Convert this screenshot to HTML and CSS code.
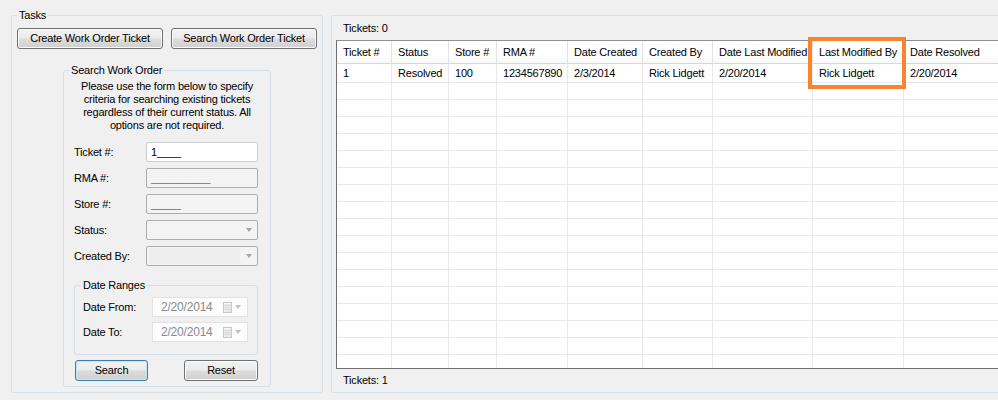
FILE: index.html
```html
<!DOCTYPE html>
<html lang="en">
<head>
    <meta charset="UTF-8">
    <meta name="viewport" content="width=device-width, initial-scale=1.0">
    <title>Work Order Tickets</title>
    <link rel="stylesheet" href="styles.css">
</head>
<body>
    <div class="window">
        <fieldset class="group tasks">
            <legend>Tasks</legend>
            <div class="task-buttons">
                <button class="btn">Create Work Order Ticket</button>
                <button class="btn">Search Work Order Ticket</button>
            </div>

            <fieldset class="group search">
                <legend>Search Work Order</legend>
                <p class="hint">Please use the form below to specify<br>criteria for searching existing tickets<br>regardless of their current status. All<br>options are not required.</p>

                <div class="form">
                    <label>Ticket #:</label>
                    <div class="field">1____</div>
                    <label>RMA #:</label>
                    <div class="field disabled">__________</div>
                    <label>Store #:</label>
                    <div class="field disabled">_____</div>
                    <label>Status:</label>
                    <div class="field combo disabled"><span class="arrow"></span></div>
                    <label>Created By:</label>
                    <div class="field combo disabled"><span class="combo-edit"></span><span class="arrow"></span></div>
                </div>

                <fieldset class="group dates">
                    <legend>Date Ranges</legend>
                    <div class="date-form">
                        <label>Date From:</label>
                        <div class="picker">
                            <span>2/20/2014</span>
                            <svg class="cal" width="9" height="11" viewBox="0 0 9 11"><rect x="0.5" y="0.5" width="8" height="10" fill="#f6f6f6" stroke="#c8c8c8"/><path d="M1 3.5h7M1 5.5h7M1 7.5h7M3 2v8M5 2v8M7 2v8" stroke="#dcdcdc"/></svg>
                            <span class="arrow"></span>
                        </div>
                        <label>Date To:</label>
                        <div class="picker">
                            <span>2/20/2014</span>
                            <svg class="cal" width="9" height="11" viewBox="0 0 9 11"><rect x="0.5" y="0.5" width="8" height="10" fill="#f6f6f6" stroke="#c8c8c8"/><path d="M1 3.5h7M1 5.5h7M1 7.5h7M3 2v8M5 2v8M7 2v8" stroke="#dcdcdc"/></svg>
                            <span class="arrow"></span>
                        </div>
                    </div>
                </fieldset>

                <div class="actions">
                    <button class="btn small default">Search</button>
                    <button class="btn small">Reset</button>
                </div>
            </fieldset>
        </fieldset>

        <div class="group results">
            <div class="count">Tickets: 0</div>
            <div class="grid">
                <table>
                    <colgroup>
                        <col style="width:55px">
                        <col style="width:57px">
                        <col style="width:48px">
                        <col style="width:71px">
                        <col style="width:75px">
                        <col style="width:70px">
                        <col style="width:100px">
                        <col style="width:91px">
                        <col style="width:100px">
                    </colgroup>
                    <thead>
                        <tr>
                            <th>Ticket #</th>
                            <th>Status</th>
                            <th>Store #</th>
                            <th>RMA #</th>
                            <th>Date Created</th>
                            <th>Created By</th>
                            <th>Date Last Modified</th>
                            <th>Last Modified By</th>
                            <th>Date Resolved</th>
                        </tr>
                    </thead>
                    <tbody>
                        <tr class="first">
                            <td>1</td>
                            <td>Resolved</td>
                            <td>100</td>
                            <td>1234567890</td>
                            <td>2/3/2014</td>
                            <td>Rick Lidgett</td>
                            <td>2/20/2014</td>
                            <td>Rick Lidgett</td>
                            <td>2/20/2014</td>
                        </tr>
                        <tr><td></td><td></td><td></td><td></td><td></td><td></td><td></td><td></td><td></td></tr>
                        <tr><td></td><td></td><td></td><td></td><td></td><td></td><td></td><td></td><td></td></tr>
                        <tr><td></td><td></td><td></td><td></td><td></td><td></td><td></td><td></td><td></td></tr>
                        <tr><td></td><td></td><td></td><td></td><td></td><td></td><td></td><td></td><td></td></tr>
                        <tr><td></td><td></td><td></td><td></td><td></td><td></td><td></td><td></td><td></td></tr>
                        <tr><td></td><td></td><td></td><td></td><td></td><td></td><td></td><td></td><td></td></tr>
                        <tr><td></td><td></td><td></td><td></td><td></td><td></td><td></td><td></td><td></td></tr>
                        <tr><td></td><td></td><td></td><td></td><td></td><td></td><td></td><td></td><td></td></tr>
                        <tr><td></td><td></td><td></td><td></td><td></td><td></td><td></td><td></td><td></td></tr>
                        <tr><td></td><td></td><td></td><td></td><td></td><td></td><td></td><td></td><td></td></tr>
                        <tr><td></td><td></td><td></td><td></td><td></td><td></td><td></td><td></td><td></td></tr>
                        <tr><td></td><td></td><td></td><td></td><td></td><td></td><td></td><td></td><td></td></tr>
                        <tr><td></td><td></td><td></td><td></td><td></td><td></td><td></td><td></td><td></td></tr>
                        <tr><td></td><td></td><td></td><td></td><td></td><td></td><td></td><td></td><td></td></tr>
                        <tr><td></td><td></td><td></td><td></td><td></td><td></td><td></td><td></td><td></td></tr>
                        <tr><td></td><td></td><td></td><td></td><td></td><td></td><td></td><td></td><td></td></tr>
                        <tr><td></td><td></td><td></td><td></td><td></td><td></td><td></td><td></td><td></td></tr>
                    </tbody>
                </table>
            </div>
            <div class="count">Tickets: 1</div>
            <div class="highlight"></div>
        </div>
    </div>
</body>
</html>
```

FILE: styles.css
```css
/* WinForms look: Win7 group boxes and buttons */
:root {
    --window: #f0f0f0;
    --group-line: #d5dfe5;
    --grid-line: #e8e8e8;
    --callout: #f5862d;
}

* {
    box-sizing: border-box;
}

body {
    margin: 0;
    padding-top: 9px;
    background: var(--window);
    font-family: 'Liberation Sans', Arial, sans-serif;
    font-size: 11px;
    line-height: 13px;
    letter-spacing: -0.2px;
    color: #000;
    overflow: hidden;
}

.window {
    display: flex;
    align-items: stretch;
    padding-left: 11px;
}

/* group boxes */
.group {
    margin: 0;
    padding: 0;
    min-width: 0;
    border: 1px solid var(--group-line);
    border-radius: 3px;
}

.group legend {
    margin-left: 5px;
    padding: 0 2px;
    line-height: 13px;
}

.tasks {
    width: 312px;
    flex: none;
    padding: 0 5px;
}

.tasks > legend {
    margin-left: 0;
}

.task-buttons {
    display: flex;
    gap: 8px;
    margin-top: 6px;
}

.btn {
    height: 21px;
    padding: 0;
    font: inherit;
    letter-spacing: inherit;
    color: #000;
    border: 1px solid #707070;
    border-radius: 3px;
    background: linear-gradient(#f2f2f2 0%, #ebebeb 48%, #dddddd 52%, #cfcfcf 100%);
    box-shadow: inset 0 0 0 1px #fbfbfb;
}

.task-buttons .btn {
    width: 146px;
}

.btn.small {
    width: 73px;
}

.btn.default {
    border-color: #3c7fb1;
    box-shadow: inset 0 0 0 1px #c4e5f6;
}

.search {
    width: 208px;
    margin: 15px auto 5px;
    padding: 0 0 5px;
}

.hint {
    margin: 3px 0 0;
    text-align: center;
}

.form {
    display: grid;
    grid-template-columns: 72px 112px;
    grid-auto-rows: 20px;
    row-gap: 6px;
    align-items: center;
    margin: 10px 0 0 10px;
}

.field {
    position: relative;
    height: 20px;
    padding: 3px 4px 0;
    background: #fff;
    border: 1px solid #cdcdcd;
    border-radius: 2px;
    overflow: hidden;
}

.field.disabled {
    background: #f3f3f3;
    border-color: #adadad;
    color: #6d6d6d;
}

.combo {
    display: flex;
    justify-content: flex-end;
    align-items: center;
    padding: 1px 5px 1px 2px;
}

.combo-edit {
    flex: 1;
    align-self: stretch;
    margin-right: 6px;
    background: #eeeeee;
}

.arrow {
    width: 0;
    height: 0;
    border-left: 3.5px solid transparent;
    border-right: 3.5px solid transparent;
    border-top: 4px solid #a6a6a6;
}

.dates {
    width: 184px;
    margin: 13px 0 0 10px;
    padding: 0 0 12px 8px;
}

.dates > legend {
    margin-left: -2px;
}

.date-form {
    display: grid;
    grid-template-columns: 69px 96px;
    grid-auto-rows: 20px;
    row-gap: 5px;
    align-items: center;
    margin-top: 5px;
}

.picker {
    display: flex;
    align-items: center;
    height: 20px;
    padding: 0 6px 0 8px;
    background: #fcfcfc;
    border: 1px solid #e2e2e2;
    color: #8b8b8b;
}

.picker span:first-child {
    flex: 1;
    font-size: 12px;
}

.picker .cal {
    margin-right: 3px;
}

.picker .arrow {
    border-top-color: #c2c2c2;
}

.actions {
    display: flex;
    justify-content: space-between;
    width: 183px;
    margin: 5px 0 0 11px;
}

.actions .btn:last-child {
    width: 74px;
}

/* results panel */
.results {
    position: relative;
    flex: none;
    width: 690px;
    margin: 6px 0 0 8px;
    display: flex;
    flex-direction: column;
}

.count {
    margin: 6px 0 0 11px;
}

.grid {
    height: 329px;
    margin: 5px 0 0 4px;
    background: #fff;
    border: 1px solid #6f6f6f;
    border-top-color: #8e8e8e;
    overflow: hidden;
}

.results .count + .grid + .count {
    margin-top: 5px;
}

table {
    table-layout: fixed;
    width: 667px;
    border-collapse: separate;
    border-spacing: 0;
}

th,
td {
    box-sizing: border-box;
    padding: 0 0 0 6px;
    text-align: left;
    font-weight: normal;
    white-space: nowrap;
    overflow: hidden;
    border-right: 1px solid var(--grid-line);
    border-bottom: 1px solid var(--grid-line);
}

th {
    height: 23px;
    background: linear-gradient(#fff 0%, #fff 60%, #f8f9fa 100%);
    border-right-color: #e2e3e4;
    border-bottom-color: #d8d8d8;
}

tr.first td {
    height: 19px;
}

td {
    height: 17px;
}

.highlight {
    position: absolute;
    left: 476px;
    top: 21px;
    width: 98px;
    height: 52px;
    border: 4px solid var(--callout);
    pointer-events: none;
}
```
